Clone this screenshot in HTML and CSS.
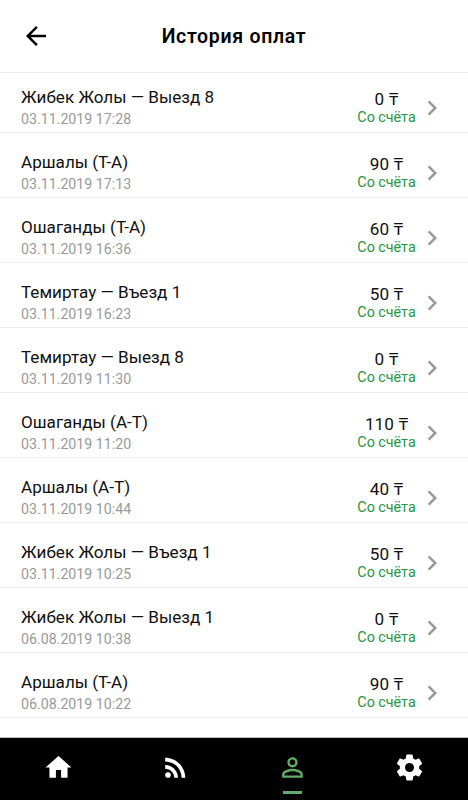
FILE: index.html
```html
<!DOCTYPE html>
<html lang="ru">
<head>
	<meta charset="UTF-8">
	<title>История оплат</title>
	<link rel="stylesheet" href="styles.css">
</head>
<body>
	<!-- шапка -->
	<header class="header">
		<a class="back" href="#"><svg viewBox="0 0 24 24"><path d="M20 11H7.83l5.59-5.59L12 4l-8 8 8 8 1.41-1.41L7.83 13H20v-2z"/></svg></a>
		<h1>История оплат</h1>
	</header>

	<!-- список оплат -->
	<ul class="list" id="list"></ul>

	<!-- нижнее меню -->
	<nav class="menu">
		<a href="#"><svg viewBox="0 0 24 24"><path d="M10 20v-6h4v6h5v-8h3L12 3 2 12h3v8z"/></svg></a>
		<a href="#"><svg viewBox="0 0 24 24"><circle cx="6.18" cy="17.82" r="2.18"/><path d="M4 4.44v2.83c7.03 0 12.73 5.7 12.73 12.73h2.83c0-8.59-6.97-15.56-15.56-15.56zm0 5.66v2.83c3.9 0 7.07 3.17 7.07 7.07h2.83c0-5.47-4.43-9.9-9.9-9.9z"/></svg></a>
		<a class="current" href="#"><svg viewBox="0 0 24 24"><path d="M12 5.9a2.1 2.1 0 1 1 0 4.2 2.1 2.1 0 0 1 0-4.2m0 9c2.97 0 6.1 1.46 6.1 2.1v1.1H5.9V17c0-.64 3.13-2.1 6.1-2.1M12 4C9.79 4 8 5.79 8 8s1.79 4 4 4 4-1.79 4-4-1.79-4-4-4zm0 9c-2.67 0-8 1.34-8 4v3h16v-3c0-2.66-5.33-4-8-4z"/></svg></a>
		<a href="#"><svg viewBox="0 0 24 24"><path d="M19.43 12.98c.04-.32.07-.64.07-.98s-.03-.66-.07-.98l2.11-1.65c.19-.15.24-.42.12-.64l-2-3.46c-.12-.22-.39-.3-.61-.22l-2.49 1c-.52-.4-1.08-.73-1.69-.98l-.38-2.65C14.46 2.18 14.25 2 14 2h-4c-.25 0-.46.18-.49.42l-.38 2.65c-.61.25-1.17.59-1.69.98l-2.49-1c-.23-.09-.49 0-.61.22l-2 3.46c-.13.22-.07.49.12.64l2.11 1.65c-.04.32-.07.65-.07.98s.03.66.07.98l-2.11 1.65c-.19.15-.24.42-.12.64l2 3.46c.12.22.39.3.61.22l2.49-1c.52.4 1.08.73 1.69.98l.38 2.65c.03.24.24.42.49.42h4c.25 0 .46-.18.49-.42l.38-2.65c.61-.25 1.17-.59 1.69-.98l2.49 1c.23.09.49 0 .61-.22l2-3.46c.12-.22.07-.49-.12-.64l-2.11-1.65zM12 15.5a3.5 3.5 0 1 1 0-7 3.5 3.5 0 0 1 0 7z"/></svg></a>
	</nav>

	<script type="text/javascript">
		//название, дата, сумма
		var items=[
			['Жибек Жолы — Выезд 8','03.11.2019 17:28',0],
			['Аршалы (Т-А)','03.11.2019 17:13',90],
			['Ошаганды (Т-А)','03.11.2019 16:36',60],
			['Темиртау — Въезд 1','03.11.2019 16:23',50],
			['Темиртау — Выезд 8','03.11.2019 11:30',0],
			['Ошаганды (А-Т)','03.11.2019 11:20',110],
			['Аршалы (А-Т)','03.11.2019 10:44',40],
			['Жибек Жолы — Въезд 1','03.11.2019 10:25',50],
			['Жибек Жолы — Выезд 1','06.08.2019 10:38',0],
			['Аршалы (Т-А)','06.08.2019 10:22',90]
		];
		var html='';
		for(var i=0;i<items.length;i++){
			html+='<li>'+
				'<div class="info"><p class="name">'+items[i][0]+'</p><p class="date">'+items[i][1]+'</p></div>'+
				'<div class="pay"><p class="sum">'+items[i][2]+' ₸</p><p class="from">Со счёта</p></div>'+
				'<svg class="arrow" viewBox="0 0 24 24"><path d="M10 6L8.59 7.41 13.17 12l-4.58 4.59L10 18l6-6z"/></svg>'+
				'</li>';
		}
		document.getElementById('list').innerHTML=html;
	</script>
</body>
</html>
```

FILE: styles.css
```css
*{margin: 0;padding: 0;box-sizing: border-box;}
body{height: 800px;display: flex;flex-direction: column;overflow: hidden;background: #fff;color: #111;font-family: Roboto, "Noto Sans", sans-serif;}
svg{display: block;fill: currentColor;}

.header{height: 73px;display: grid;grid-template-columns: 52px 1fr 52px;align-items: center;border-bottom: 1px solid #ececec;}
.header .back{color: #000;padding-left: 21px;}
.header .back svg{width: 30px;height: 30px;}
.header h1{font-size: 19.5px;line-height: 24px;padding-top: 1px;font-weight: 600;letter-spacing: 0.7px;text-align: center;color: #000;}

.list{flex: 1;list-style-type: none;}
.list li{height: 65px;padding: 0 21px;display: flex;align-items: flex-end;border-bottom: 1px solid #ececec;}
.list li:first-child{height: 60px;}
.info{flex: 1;padding-bottom: 3px;}
.name{font-size: 17.1px;line-height: 23px;}
.date{font-size: 14.2px;line-height: 20px;color: #999;}
.pay{width: 60px;padding-bottom: 6px;margin-right: 1px;text-align: center;white-space: nowrap;}
.sum{font-size: 17.1px;line-height: 18px;word-spacing: 0.6px;margin-left: -1px;}
.from{font-size: 14.3px;line-height: 18px;margin-left: -1px;color: #249540;}
.arrow{width: 30px;height: 30px;margin-left: -1px;margin-bottom: 9.5px;color: #999;}

.menu{height: 63px;display: flex;background: #000;border-top: 1px solid #bbb;}
.menu a{flex: 1;display: flex;justify-content: center;padding-top: 14px;color: #fff;position: relative;}
.menu svg{width: 31px;height: 31px;}
.menu .current{color: #62ab67;}
.menu .current::after{content: "";position: absolute;left: 50%;bottom: 6px;width: 19px;height: 3px;margin-left: -10px;background: #62ab67;}
```
